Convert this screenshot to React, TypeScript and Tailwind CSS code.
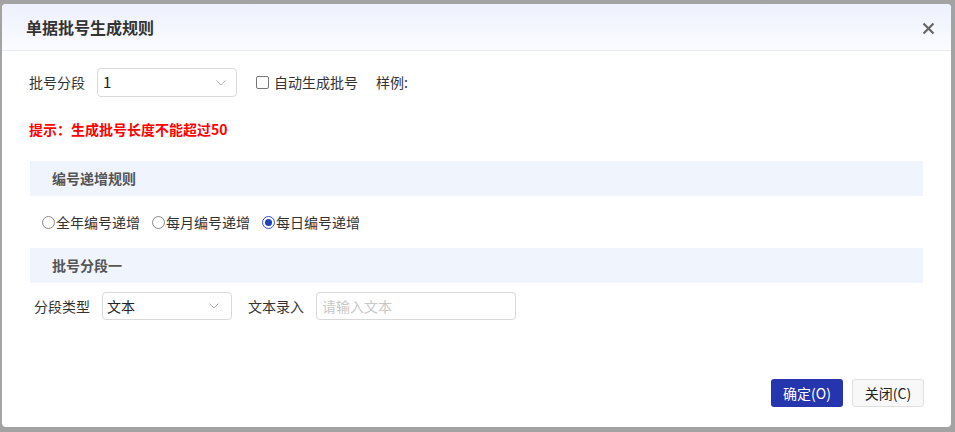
import React from "react";

const font = { fontFamily: '"Noto Sans CJK SC", "Noto Sans", sans-serif' };

function Chevron() {
  return (
    <svg width="10" height="6" viewBox="0 0 10 6" fill="none">
      <path d="M0.5 0.5 L5 5 L9.5 0.5" stroke="#b0b0b0" strokeWidth="1" />
    </svg>
  );
}

function Radio({ checked, label }: { checked?: boolean; label: string }) {
  return (
    <div className="flex items-center">
      {checked ? (
        <span className="flex h-[13px] w-[13px] items-center justify-center rounded-full border border-[#2b4fd6] bg-white">
          <span className="h-[7px] w-[7px] rounded-full bg-[#1f3fbf]" />
        </span>
      ) : (
        <span className="h-[13px] w-[13px] rounded-full border border-[#8a8a8a] bg-white" />
      )}
      <span className="ml-[1px] text-[14px] text-[#333]">{label}</span>
    </div>
  );
}

export default function App() {
  return (
    <div
      className="h-[432px] w-[955px] bg-[#a3a3a3] pb-[5px] pl-[2px] pr-[4px] pt-[4px]"
      style={font}
    >
      <div className="flex h-[423px] w-[949px] flex-col overflow-hidden rounded-[4px] bg-white">
        {/* header */}
        <div className="flex h-[47px] shrink-0 items-center justify-between border-b border-[#e8eaf0] bg-gradient-to-b from-[#edf1fd] to-[#fbfcff] pl-[24px] pr-[16px]">
          <span className="text-[16px] font-bold text-[#333]">单据批号生成规则</span>
          <svg width="13" height="13" viewBox="0 0 13 13" className="mt-[3px]">
            <path d="M1.5 1.5 L11.5 11.5 M11.5 1.5 L1.5 11.5" stroke="#666" strokeWidth="2.2" />
          </svg>
        </div>

        {/* row 1 */}
        <div className="mt-[17px] flex items-center pl-[27px]">
          <span className="w-[56px] text-[14px] text-[#333]">批号分段</span>
          <div className="ml-[12px] flex h-[29px] w-[140px] items-center justify-between rounded-[4px] border border-[#d9d9d9] pl-[5px] pr-[10px]">
            <span className="text-[15px] text-[#222]">1</span>
            <Chevron />
          </div>
          <span className="ml-[19px] h-[13px] w-[13px] rounded-[2px] border border-[#777] bg-white" />
          <span className="ml-[5px] text-[14px] text-[#333]">自动生成批号</span>
          <span className="ml-[18px] text-[14px] text-[#333]">样例:</span>
        </div>

        {/* tip */}
        <div className="mt-[23px] pl-[27px] text-[14px] font-bold leading-[18px] text-[#ff0000]">
          提示：生成批号长度不能超过50
        </div>

        {/* section 1 */}
        <div className="mx-[28px] mt-[23px] flex h-[35px] items-center bg-[#f0f4fd] pl-[22px]">
          <span className="text-[14px] font-bold text-[#555]">编号递增规则</span>
        </div>

        <div className="mt-[16px] flex h-[20px] items-center gap-[12px] pl-[40px]">
          <Radio label="全年编号递增" />
          <Radio label="每月编号递增" />
          <Radio checked label="每日编号递增" />
        </div>

        {/* section 2 */}
        <div className="mx-[28px] mt-[16px] flex h-[35px] items-center bg-[#f0f4fd] pl-[22px]">
          <span className="text-[14px] font-bold text-[#555]">批号分段一</span>
        </div>

        <div className="mt-[9px] flex items-center pl-[32px]">
          <span className="w-[56px] text-[14px] text-[#333]">分段类型</span>
          <div className="ml-[12px] flex h-[28px] w-[130px] items-center justify-between rounded-[4px] border border-[#d9d9d9] pl-[4px] pr-[12px]">
            <span className="text-[14px] text-[#222]">文本</span>
            <Chevron />
          </div>
          <span className="ml-[16px] w-[56px] text-[14px] text-[#333]">文本录入</span>
          <div className="ml-[12px] flex h-[28px] w-[200px] items-center rounded-[4px] border border-[#d9d9d9] pl-[5px]">
            <span className="text-[14px] text-[#c8c8c8]">请输入文本</span>
          </div>
        </div>

        <div className="flex-1" />

        <div className="flex justify-end gap-[9px] pb-[20px] pr-[27px]">
          <button className="flex h-[28px] w-[72px] items-center justify-center rounded-[3px] bg-[#2535ad] text-[14px] text-white">
            确定(O)
          </button>
          <button className="flex h-[28px] w-[72px] items-center justify-center rounded-[3px] border border-[#e0e0e0] bg-[#f8f8f8] text-[14px] text-[#222]">
            关闭(C)
          </button>
        </div>
      </div>
    </div>
  );
}
